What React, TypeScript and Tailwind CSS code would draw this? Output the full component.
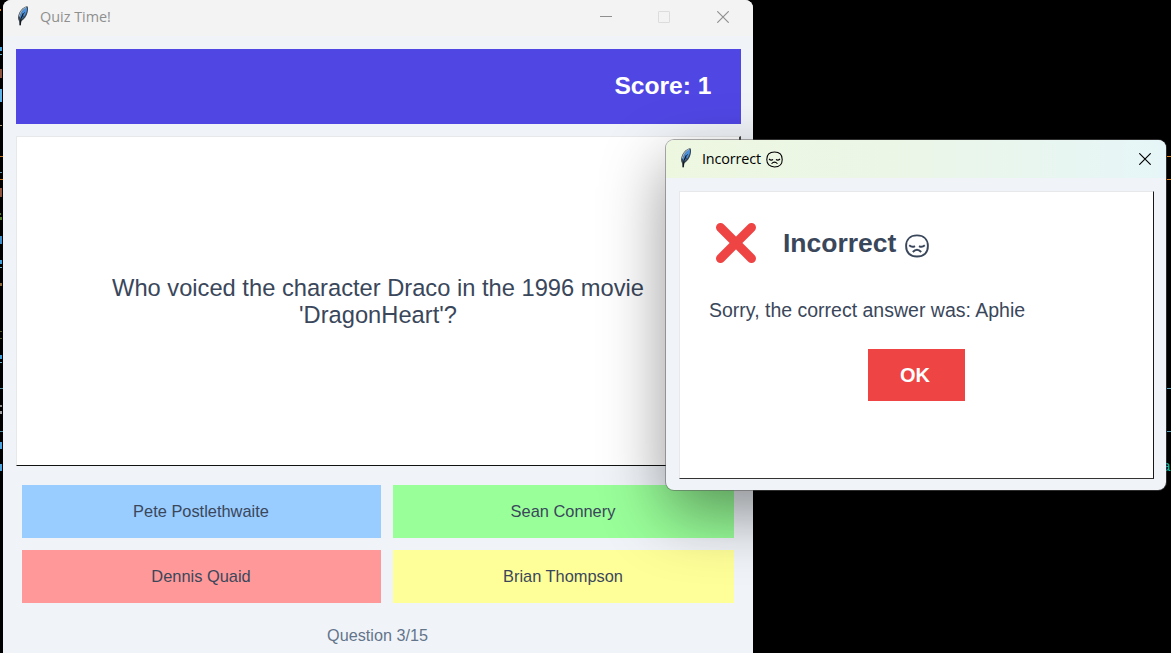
import React from "react";

const leftMarks = [
  { y: 9, h: 2, w: 1, c: "#d98a1f" },
  { y: 47, h: 4, w: 2, c: "#3fa0dc" },
  { y: 54, h: 1, w: 2, c: "#6fb4d0" },
  { y: 69, h: 9, w: 2, c: "#8d5440" },
  { y: 89, h: 13, w: 2, c: "#5cb2e6" },
  { y: 125, h: 1, w: 2, c: "#b3a075" },
  { y: 156, h: 1, w: 3, c: "#c9731c" },
  { y: 172, h: 1, w: 2, c: "#5d93ad" },
  { y: 179, h: 1, w: 3, c: "#c9731c" },
  { y: 188, h: 9, w: 2, c: "#8d5440" },
  { y: 213, h: 2, w: 1, c: "#4f7a2c" },
  { y: 217, h: 3, w: 2, c: "#4f7a2c" },
  { y: 236, h: 8, w: 2, c: "#3c8fca" },
  { y: 260, h: 4, w: 2, c: "#3fa0dc" },
  { y: 267, h: 1, w: 2, c: "#6fb4d0" },
  { y: 283, h: 3, w: 2, c: "#8a6a3c" },
  { y: 331, h: 1, w: 2, c: "#4f5a2c" },
  { y: 338, h: 1, w: 2, c: "#4f5a2c" },
  { y: 355, h: 4, w: 2, c: "#3fa0dc" },
  { y: 362, h: 1, w: 2, c: "#6fb4d0" },
  { y: 388, h: 1, w: 3, c: "#4e8ca6" },
  { y: 405, h: 2, w: 2, c: "#8c8c8c" },
  { y: 411, h: 3, w: 2, c: "#a0a0a0" },
  { y: 431, h: 1, w: 3, c: "#4e8ca6" },
  { y: 442, h: 7, w: 2, c: "#4aa3dc" },
  { y: 464, h: 7, w: 2, c: "#4aa3dc" },
];

const rightMarks = [
  { y: 156, c: "#e07f1c" },
  { y: 179, c: "#e07f1c" },
  { y: 388, c: "#5a9fbc" },
  { y: 431, c: "#5a9fbc" },
];

function Feather() {
  return (
    <svg width="14" height="22" viewBox="0 0 14 22" className="shrink-0">
      <path d="M11.3 1.2 C8 1.5 4.5 4.5 2.8 9 C1.6 12 2 14.5 3 16 L3.6 20.3 L4.8 20.3 L5.4 16.2 C8.2 14.5 10.8 11 11.7 7 C12.3 4.3 12.2 2 11.3 1.2Z" fill="#39454f" />
      <path d="M10.8 2.2 C8 3.5 5 7 3.9 11.8 L4.4 15 C7.2 13 9.4 10.2 10.6 6.8 C11.1 5 11.2 3.3 10.8 2.2Z" fill="#4a90dc" />
      <path d="M10 2.3 C6.8 4 4.2 7.2 3.3 11.5" stroke="#a3b3bf" strokeWidth="1.2" fill="none" />
      <path d="M7.4 8.2 L5 13.5 L4.1 20.3" stroke="#10161c" strokeWidth="1.1" fill="none" />
      <path d="M8.8 7.5 L7.6 8.5 M7.8 11 L6.2 12" stroke="#152c4d" strokeWidth="1" />
    </svg>
  );
}

function SadFace({ className, weight }: { className: string; weight: number }) {
  return (
    <svg viewBox="0 0 24 24" fill="none" stroke="currentColor" strokeWidth={weight} className={className}>
      <path d="M12 1.4 C18.9 1.4 22.9 5.6 22.9 12 C22.9 18.6 18.9 22.5 12 22.5 C5.1 22.5 1.1 18.6 1.1 12 C1.1 5.6 5.1 1.4 12 1.4Z" />
      <path d="M4.2 11.3 Q7 13.9 10 12.1 M14 12.1 Q17 13.9 19.8 11.3" />
      <path d="M7.8 18 Q12 13.4 16.2 18" />
    </svg>
  );
}

function Cross({ className }: { className: string }) {
  return (
    <svg width="12" height="12" viewBox="0 0 12 12" fill="none" stroke="currentColor" className={className}>
      <path d="M0.3 0.3 L11.7 11.7 M11.7 0.3 L0.3 11.7" strokeWidth="1.15" />
    </svg>
  );
}

function QuizWindow() {
  return (
    <main className="ml-[3px] flex h-[661px] w-[750px] shrink-0 flex-col overflow-hidden rounded-t-lg bg-[#f0f4f9] text-[#3a475b]">
      <header className="flex h-9 shrink-0 items-center bg-[#f3f3f3] pr-[24px] pl-[13px] text-[#8f8f8f]">
        <div className="-mt-[5px]"><Feather /></div>
        <h1 className="-mt-[3px] ml-[10px] grow font-['Open_Sans',sans-serif] text-[14.4px]">Quiz Time!</h1>
        <div className="-mt-[3px] flex items-center">
          <span className="h-px w-3 bg-[#8f8f8f]" />
          <span className="ml-[46px] size-3 rounded-[1px] border border-[#dcdcdc]" />
          <Cross className="ml-[47px]" />
        </div>
      </header>
      <div className="flex flex-col pt-[12.5px] pr-[12.5px] pl-[12.5px]">
        <div className="flex h-[75px] items-center justify-end bg-[#5046e4] pt-px pr-[29px] text-[24.6px] font-bold text-white">Score: 1</div>
        <section className="mt-3 flex h-[330px] items-center justify-center border-t-[1.5px] border-r-2 border-b border-l-[1.5px] border-t-[#e6e8ea] border-r-[#444] border-b-[#111] border-l-[#e6e8ea] bg-white pt-[3px] pl-px text-center text-[23.7px] leading-[27.5px]">
          <p>Who voiced the character Draco in the 1996 movie<br />'DragonHeart'?</p>
        </section>
        <div className="mt-[19px] grid grid-cols-[359px_341px] gap-x-3 gap-y-[12px] pl-[6px] text-[16.4px]">
          <button className="h-[53px] bg-[#99ccff] pt-px">Pete Postlethwaite</button>
          <button className="h-[53px] bg-[#99ff99] pt-px">Sean Connery</button>
          <button className="h-[53px] bg-[#ff9999] pt-px">Dennis Quaid</button>
          <button className="h-[53px] bg-[#ffff99] pt-px">Brian Thompson</button>
        </div>
        <p className="mt-5 -ml-px text-center text-[16.2px] leading-6 text-[#64748b]">Question 3/15</p>
      </div>
    </main>
  );
}

function ResultDialog() {
  return (
    <aside className="absolute top-[140px] left-[666px] flex h-[350px] w-[500px] flex-col overflow-hidden rounded-lg bg-[#f0f4f9] text-[#3a475b] shadow-[0_0_0_1px_rgba(90,90,90,0.5),0_24px_64px_rgba(0,0,0,0.42)]">
      <header className="flex h-[38px] shrink-0 items-center bg-linear-to-r from-[#edf7e0] via-[#ebf6e8] to-[#e6f6f8] pr-[15px] pl-[13px] text-black">
        <div className="-mt-[2px]"><Feather /></div>
        <h2 className="ml-[9px] font-['Open_Sans',sans-serif] text-[14.4px] tracking-[-0.15px]">Incorrect</h2>
        <SadFace className="ml-[5px] size-[17px]" weight={1.5} />
        <Cross className="ml-auto" />
      </header>
      <section className="mt-[12.5px] mr-[12px] ml-[12.5px] flex h-[288px] flex-col border-t-[1.5px] border-r border-b border-l-[1.5px] border-t-[#e6e8ea] border-r-[#181818] border-b-[#333] border-l-[#e6e8ea] bg-white">
        <div className="mt-[30px] ml-[35.5px] flex h-[42px] items-center">
          <svg width="42" height="42" viewBox="0 0 42 42" className="shrink-0">
            <path d="M5.5 5.5 L36.5 36.5 M36.5 5.5 L5.5 36.5" stroke="#ef4444" strokeWidth="9" strokeLinecap="round" />
          </svg>
          <h3 className="mt-[2px] ml-[26px] text-[26.5px] font-bold">Incorrect</h3>
          <SadFace className="mt-[6px] ml-[9px] size-6" weight={1.9} />
        </div>
        <p className="mt-[34px] ml-[29.5px] text-[19.5px] leading-6">Sorry, the correct answer was: Aphie</p>
        <button className="mt-[27px] ml-[188px] h-[52px] w-[97px] bg-[#ef4444] pr-[2px] text-[20px] font-bold text-white">OK</button>
      </section>
    </aside>
  );
}

export default function App() {
  return (
    <div className="relative flex h-[653px] w-[1171px] overflow-hidden bg-black font-['Liberation_Sans',sans-serif]">
      {leftMarks.map((m) => (
        <i key={m.y} className="absolute left-0" style={{ top: m.y, height: m.h, width: m.w, background: m.c }} />
      ))}
      <span className="absolute top-[458px] right-0 text-[14px] leading-[18px] text-[#16e3d9] font-['Liberation_Mono',monospace]">a</span>
      <QuizWindow />
      <ResultDialog />
      {rightMarks.map((m) => (
        <i key={m.y} className="absolute right-0 h-px w-[4px]" style={{ top: m.y, background: m.c }} />
      ))}
    </div>
  );
}
